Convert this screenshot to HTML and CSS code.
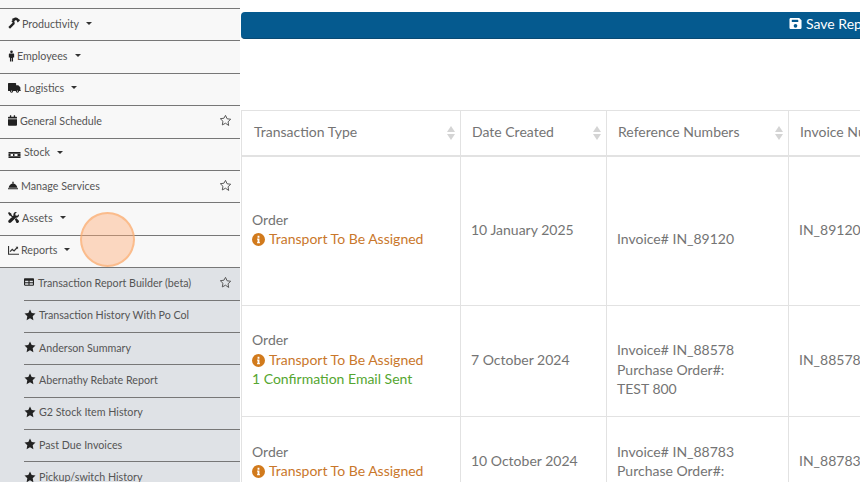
FILE: index.html
```html
<!DOCTYPE html>
<html lang="en">
<head>
<meta charset="utf-8">
<title>Transaction Report Builder</title>
<link rel="stylesheet" href="styles.css">
</head>
<body>
<svg class="defs" width="0" height="0" aria-hidden="true">
  <symbol id="i-hammer" viewBox="0 0 16 16"><path d="M1.600 14.500 8.200 7.800" fill="none" stroke="currentColor" stroke-width="3"/><path d="M5 2.800 9.500.8c1.600-.4 2.800.2 3.600 1l1.300 1.300.8.100 1 1-3.100 3-1-1V5.200l-1-.9-1.500.1-1.400 1.500 1 1-1.800 1.800L4.500 5.700l1.800-1.800Z"/></symbol>
  <symbol id="i-male" viewBox="0 0 10 16"><circle cx="5" cy="2" r="1.900"/><path d="M2.600 4.500h4.800c.8 0 1.400.6 1.400 1.300V10H7.200v5.800H5.400V11H4.600v4.800H2.800V10H1.200V5.800c0-.7.600-1.300 1.400-1.300Z"/></symbol>
  <symbol id="i-truck" viewBox="0 0 20 16"><path d="M1 1h10.500c.6 0 1 .4 1 1v2.500h2.700c.4 0 .7.2 1 .4l2.300 2.400c.3.300.5.600.5 1V12h.5v1.500H17a2.500 2.500 0 0 1-5 0H8a2.500 2.500 0 0 1-5 0H1c-.6 0-1-.4-1-1V2c0-.6.400-1 1-1Z"/><circle cx="5.500" cy="13.500" r="1" fill="#f8f8f8"/><circle cx="14.500" cy="13.500" r="1" fill="#f8f8f8"/></symbol>
  <symbol id="i-calendar" viewBox="0 0 14 16"><path d="M3 0h2v2h4V0h2v2h1.500C13.300 2 14 2.700 14 3.500V5H0V3.500C0 2.700.7 2 1.500 2H3ZM0 6h14v8.500c0 .8-.7 1.500-1.500 1.500h-11C.7 16 0 15.300 0 14.500Z"/></symbol>
  <symbol id="i-pallet" viewBox="0 0 20 10"><path fill-rule="evenodd" d="M0 0h20v1.500H0ZM0 8.500h20V10H0ZM0 2h20v6H0Zm3.500 1.500v3h4v-3Zm6.500 0v3h5v-3Z"/></symbol>
  <symbol id="i-bell" viewBox="0 0 16 12"><path d="M0 10.300h16V12H0ZM6.800 0h2.400v1.700H8.700v.9C12 3 14.500 6 15 9.400H1C1.500 6 4 3 7.300 2.600v-.9h-.5Z"/></symbol>
  <symbol id="i-tools" viewBox="0 0 16 16"><path d="M1.500 0 5 2.600v1.500l3 3-1.300 1.300-3-3H2.300L0 1.500ZM11.500 0c.5 0 .9 0 1.300.2L10.500 2.500l.5 2.500 2.500.5 2.300-2.300c.2.400.2.800.2 1.300 0 2.400-2.200 4.200-4.500 3.800L4.300 15.300c-.9.900-2.400.9-3.300 0s-.9-2.400 0-3.300L8 5C7.300 2.500 9 0 11.500 0ZM10 10.700l2-2 3.500 3.500c.7.700.7 1.900 0 2.600l-.7.700c-.7.700-1.900.7-2.600 0Z"/></symbol>
  <symbol id="i-chart" viewBox="0 0 16 14"><path d="M0 1h1.600v11.400H16V14H0Z"/><path d="M3 9.500 6.200 6l2.600 2.300L13 3.700" fill="none" stroke="currentColor" stroke-width="1.700"/><path d="m11 2.300h3.600v3.600Z"/></symbol>
  <symbol id="i-table" viewBox="0 0 16 14"><path fill-rule="evenodd" d="M1.500 1h13c.8 0 1.500.7 1.500 1.500v9c0 .8-.7 1.500-1.500 1.500h-13C.7 13 0 12.300 0 11.500v-9C0 1.700.7 1 1.500 1ZM1.800 5v2.200h5.300V5Zm7.100 0v2.200h5.300V5ZM1.800 8.800v2.400h5.300V8.800Zm7.100 0v2.400h5.300V8.800Z"/></symbol>
  <symbol id="i-star" viewBox="0 0 24 24"><path d="m12 1 3.400 7.200 7.600 1-5.600 5.400 1.400 7.900-6.800-3.800-6.800 3.800 1.400-7.900L1 9.200l7.600-1Z"/></symbol>
  <symbol id="i-star-o" viewBox="0 0 24 24"><path fill="none" stroke="currentColor" stroke-width="1.800" stroke-linejoin="round" d="m12 2.500 2.900 6.300 6.700.9-4.900 4.700 1.200 6.800L12 17l-5.900 3.200 1.200-6.800-4.900-4.700 6.700-.9Z"/></symbol>
  <symbol id="i-save" viewBox="0 0 14 14"><path fill-rule="evenodd" d="M1.500 1h9L13 3.500v8c0 .8-.7 1.500-1.500 1.500h-10C.7 13 0 12.300 0 11.500v-9C0 1.700.7 1 1.500 1ZM2.500 3v2.500h7V3.500L9 3ZM6.500 7.500a2 2 0 1 0 0 4 2 2 0 0 0 0-4Z" transform="translate(.5)"/></symbol>
  <symbol id="i-info" viewBox="0 0 14 14"><path fill-rule="evenodd" d="M7 0a7 7 0 1 1 0 14A7 7 0 0 1 7 0ZM6 3v2h2V3ZM5.500 6v1.200H6v2.600h-.5V11h3V9.800H8V6Z"/></symbol>
</svg>

<div class="page">
  <nav class="sidebar">
    <a class="nav-row"><svg class="ic ic-hammer"><use href="#i-hammer"/></svg><span>Productivity</span><i class="caret"></i></a>
    <a class="nav-row"><svg class="ic ic-male"><use href="#i-male"/></svg><span>Employees</span><i class="caret"></i></a>
    <a class="nav-row"><svg class="ic ic-truck"><use href="#i-truck"/></svg><span>Logistics</span><i class="caret"></i></a>
    <a class="nav-row"><svg class="ic ic-calendar"><use href="#i-calendar"/></svg><span>General Schedule</span><svg class="fav"><use href="#i-star-o"/></svg></a>
    <a class="nav-row"><svg class="ic ic-pallet"><use href="#i-pallet"/></svg><span class="up">Stock</span><i class="caret"></i></a>
    <a class="nav-row"><svg class="ic ic-bell"><use href="#i-bell"/></svg><span>Manage Services</span><svg class="fav"><use href="#i-star-o"/></svg></a>
    <a class="nav-row"><svg class="ic ic-tools"><use href="#i-tools"/></svg><span>Assets</span><i class="caret"></i></a>
    <a class="nav-row"><svg class="ic ic-chart"><use href="#i-chart"/></svg><span>Reports</span><i class="caret"></i></a>
    <div class="submenu">
      <a class="sub-row"><svg class="ic ic-table"><use href="#i-table"/></svg><span>Transaction Report Builder (beta)</span><svg class="fav"><use href="#i-star-o"/></svg></a>
      <a class="sub-row"><svg class="ic ic-star"><use href="#i-star"/></svg><span>Transaction History With Po Col</span></a>
      <a class="sub-row"><svg class="ic ic-star"><use href="#i-star"/></svg><span>Anderson Summary</span></a>
      <a class="sub-row"><svg class="ic ic-star"><use href="#i-star"/></svg><span>Abernathy Rebate Report</span></a>
      <a class="sub-row"><svg class="ic ic-star"><use href="#i-star"/></svg><span>G2 Stock Item History</span></a>
      <a class="sub-row"><svg class="ic ic-star"><use href="#i-star"/></svg><span>Past Due Invoices</span></a>
      <a class="sub-row"><svg class="ic ic-star"><use href="#i-star"/></svg><span>Pickup/switch History</span></a>
    </div>
  </nav>

  <main class="main">
    <button class="save-bar" type="button"><svg class="save-ic"><use href="#i-save"/></svg>Save Report</button>
    <table class="report">
      <colgroup><col class="c1"><col class="c2"><col class="c3"><col class="c4"></colgroup>
      <thead>
        <tr>
          <th><span class="th-label">Transaction Type</span><i class="sort"></i></th>
          <th><span class="th-label">Date Created</span><i class="sort"></i></th>
          <th><span class="th-label">Reference Numbers</span><i class="sort"></i></th>
          <th><span class="th-label">Invoice Number</span><i class="sort"></i></th>
        </tr>
      </thead>
      <tbody>
        <tr class="r1">
          <td>Order<br><span class="warn"><svg class="info"><use href="#i-info"/></svg>Transport To Be Assigned</span></td>
          <td>10 January 2025</td>
          <td><br>Invoice# IN_89120</td>
          <td>IN_89120</td>
        </tr>
        <tr class="r2">
          <td>Order<br><span class="warn"><svg class="info"><use href="#i-info"/></svg>Transport To Be Assigned</span><br><span class="ok">1 Confirmation Email Sent</span></td>
          <td>7 October 2024</td>
          <td><br>Invoice# IN_88578<br>Purchase Order#:<br>TEST 800</td>
          <td>IN_88578</td>
        </tr>
        <tr class="r3">
          <td>Order<br><span class="warn"><svg class="info"><use href="#i-info"/></svg>Transport To Be Assigned</span></td>
          <td>10 October 2024</td>
          <td><br>Invoice# IN_88783<br>Purchase Order#:<br>TEST 801</td>
          <td>IN_88783</td>
        </tr>
      </tbody>
    </table>
  </main>
</div>
<div class="tap"></div>
</body>
</html>
```

FILE: styles.css
```css
* { box-sizing: border-box; }
html, body { margin: 0; height: 100%; overflow: hidden; background: #fff; }
body { font-family: "Lato", "Open Sans", sans-serif; color: #747474; }
.defs { position: absolute; }
.page { display: flex; height: 482px; overflow: hidden; }

.sidebar { flex: 0 0 240px; width: 240px; padding-top: 8px; background: #f8f8f8; color: #555; font-size: 10.7px; }
.nav-row, .sub-row { display: flex; align-items: center; height: 32.4px; border-top: 1px solid #777; padding-bottom: 3px; white-space: nowrap; }
.nav-row { padding-left: 8px; padding-right: 8px; }
.submenu { background: #dfe2e6; padding-left: 24px; }
.sub-row { padding-right: 8px; }
.nav-row:nth-child(8) + .submenu { border-top: 1px solid #777; }
.submenu .sub-row:first-child { border-top: 0; height: 31.4px; }
.ic { fill: #222; color: #222; flex: none; }
.ic-hammer { width: 12px; height: 12px; margin-right: 2px; }
.ic-male { width: 7px; height: 12px; margin-right: 2px; }
.ic-truck { width: 13px; height: 11px; margin-right: 3px; }
.ic-calendar { width: 9px; height: 11px; margin-right: 3px; }
.ic-pallet { width: 13px; height: 6px; margin-right: 3px; margin-top: 5px; }
.ic-bell { width: 10px; height: 9px; margin-right: 3px; }
.ic-tools { width: 11px; height: 11px; margin-right: 3px; }
.ic-chart { width: 11px; height: 10px; margin-right: 2px; fill: #333; color: #333; }
.ic-table { width: 10px; height: 10px; margin-right: 4px; }
.ic-star { width: 12px; height: 12px; margin-right: 3px; }
.up { margin-top: -2px; }
.caret { width: 0; height: 0; margin-left: 7px; border-left: 3px solid transparent; border-right: 3px solid transparent; border-top: 3px solid #333; }
.fav { width: 13px; height: 13px; margin-left: auto; color: #555; flex: none; }

.main { flex: 1 0 620px; min-width: 620px; padding: 12px 0 0 1px; overflow: hidden; }
.save-bar { display: flex; align-items: center; width: 700px; height: 27px; padding: 0 0 3px 548px; border: 0; border-bottom: 1px solid #0a4a73; border-radius: 4px 0 0 4px; background: #055a8f; color: #fff; font: 14px "Lato", sans-serif; white-space: nowrap; }
.save-ic { width: 13px; height: 13px; margin-right: 4px; fill: #fff; flex: none; }

.report { table-layout: fixed; width: 747px; margin-top: 71px; border-collapse: collapse; font-size: 14px; line-height: 19.5px; }
.c1 { width: 219px; }
.c2 { width: 146px; }
.c3 { width: 182px; }
.c4 { width: 200px; }
.report th, .report td { padding: 0 11px 3px 10px; border: 1px solid #e2e2e2; vertical-align: middle; text-align: left; font-weight: 400; }
.report th { position: relative; height: 45px; padding-left: 11px; border-bottom-width: 2px; }
.report th:first-child { padding-left: 12px; }
.th-label { white-space: nowrap; }
.sort { position: absolute; right: 5px; top: 15px; width: 8px; height: 14px; }
.sort::before, .sort::after { content: ""; position: absolute; left: 0; width: 0; height: 0; border-left: 4px solid transparent; border-right: 4px solid transparent; }
.sort::before { top: 0; border-bottom: 6px solid #d4d4d4; }
.sort::after { bottom: 0; border-top: 6px solid #d4d4d4; }
.r1 td { height: 150px; }
.r2 td { height: 111px; }
.r3 td { height: 92px; }
.warn { color: #c9772b; white-space: nowrap; }
.ok { color: #55a630; white-space: nowrap; }
.info { width: 13px; height: 13px; margin-right: 4px; vertical-align: -2px; fill: #d17a1c; }

.tap { position: absolute; left: 80px; top: 212px; width: 55px; height: 55px; border: 2px solid rgba(250, 170, 105, .6); border-radius: 50%; background: rgba(255, 170, 115, .42); }
```
